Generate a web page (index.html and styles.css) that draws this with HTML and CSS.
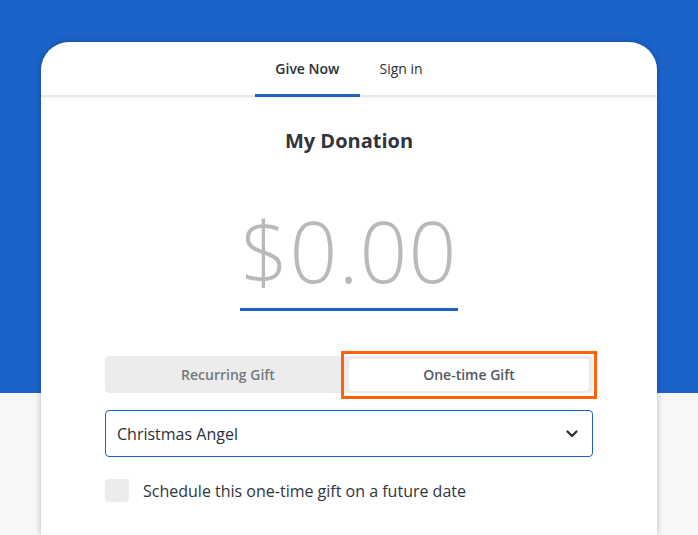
FILE: index.html
```html
<!DOCTYPE html>
<html>
<head>
<meta charset="utf-8">
<link rel="stylesheet" href="styles.css">
</head>
<body>
<div class="card">
  <nav class="tabs">
    <a class="tab active">Give Now</a>
    <a class="tab">Sign in</a>
  </nav>
  <div class="content">
    <h1 class="title">My Donation</h1>
    <div class="amount">$0.00</div>
    <div class="toggle">
      <button class="seg first">Recurring Gift</button>
      <span class="highlight"><button class="seg on">One-time Gift</button></span>
    </div>
    <div class="select">
      <span>Christmas Angel</span>
      <svg width="12" height="8" viewBox="0 0 12 8"><path d="M1.5 1.5 L6 6 L10.5 1.5" fill="none" stroke="#2a2f35" stroke-width="2.2" stroke-linecap="round" stroke-linejoin="round"/></svg>
    </div>
    <label class="check"><span class="box"></span>Schedule this one-time gift on a future date</label>
  </div>
</div>
</body>
</html>
```

FILE: styles.css
```css
html, body { margin: 0; padding: 0; }
body {
  width: 698px;
  height: 535px;
  overflow: hidden;
  background: linear-gradient(to bottom, #1b63c9 0, #1b63c9 393px, #f7f7f7 393px);
  font-family: "Open Sans", "Liberation Sans", sans-serif;
  padding-top: 42px;
  box-sizing: border-box;
}
.card {
  margin-left: 41px;
  width: 616px;
  height: 493px;
  background: #fff;
  border-radius: 28px 28px 0 0;
  box-shadow: 0 0 6px rgba(0,0,0,0.25);
}
.tabs {
  display: flex;
  justify-content: center;
  height: 53px;
  border-bottom: 2px solid #e8e8e8;
  box-shadow: 0 1px 2px rgba(0,0,0,0.06);
}
.tab {
  padding: 0 20px;
  display: flex;
  align-items: center;
  font-size: 14px;
  color: #2b3036;
  box-sizing: border-box;
  border-bottom: 3px solid transparent;
  margin-bottom: -2px;
  padding-top: 1px;
}
.tab.active {
  font-weight: 600;
  border-bottom-color: #1b63c9;
}
.content {
  width: 488px;
  margin: 0 auto;
  display: flex;
  flex-direction: column;
  align-items: center;
}
.title {
  margin: 31px 0 0;
  font-size: 20px;
  line-height: 26px;
  font-weight: 700;
  color: #2f353b;
}
.amount {
  margin-top: 49px;
  width: 218px;
  text-align: center;
  font-size: 84px;
  font-weight: 300;
  line-height: 96px;
  color: #b8b9ba;
  border-bottom: 3px solid #1b63c9;
  padding-bottom: 9px;
  letter-spacing: 1px;
}
.toggle {
  margin-top: 45px;
  width: 488px;
  height: 37px;
  background: #ececec;
  border-radius: 4px;
  display: flex;
  align-items: center;
  padding: 0 4px 0 0;
  box-sizing: border-box;
}
.seg {
  border: 0;
  background: transparent;
  font-family: inherit;
  font-size: 14px;
  font-weight: 600;
  color: #75797d;
  height: 32px;
  flex: 1 1 0;
  min-width: 0;
  border-radius: 4px;
  padding: 0;
}
.seg.first { text-indent: 6px; }
.highlight {
  flex: 1 1 0;
  display: flex;
  outline: 3px solid #ff620d;
  outline-offset: 5px;
  margin-left: 4px;
}
.seg.on {
  background: #fff;
  color: #53585d;
}
.select {
  margin-top: 17px;
  width: 488px;
  height: 47px;
  border: 1px solid #1b63c9;
  border-radius: 4px;
  box-sizing: border-box;
  display: flex;
  align-items: center;
  justify-content: space-between;
  padding: 0 14px 0 11px;
  font-size: 16px;
  color: #2b3036;
}
.check {
  margin-top: 22px;
  align-self: flex-start;
  display: flex;
  align-items: center;
  font-size: 16px;
  color: #2f353b;
}
.box {
  width: 24px;
  height: 23px;
  background: #ececec;
  border-radius: 3px;
  margin-right: 14px;
}
```
